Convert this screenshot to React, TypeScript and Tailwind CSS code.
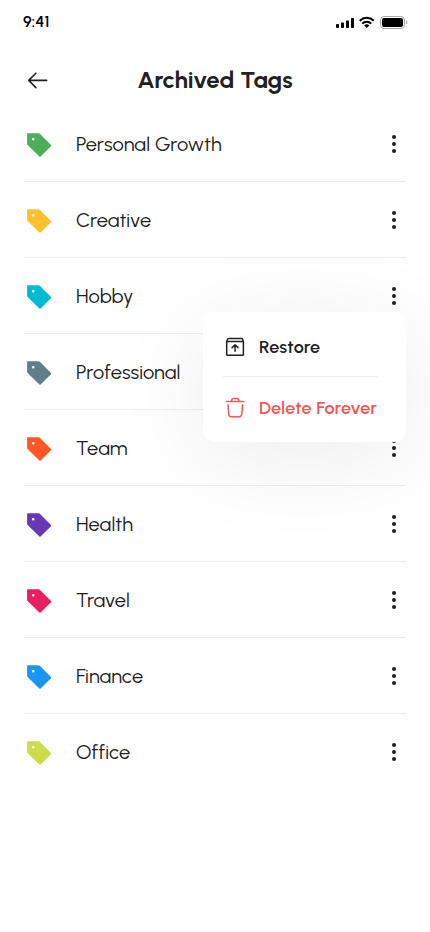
const tags = [
  { name: 'Personal Growth', color: '#4CAF57' },
  { name: 'Creative', color: '#FFC02D' },
  { name: 'Hobby', color: '#00BCD3' },
  { name: 'Professional', color: '#607D8A' },
  { name: 'Team', color: '#FF5726' },
  { name: 'Health', color: '#673AB3' },
  { name: 'Travel', color: '#E91E61' },
  { name: 'Finance', color: '#1A96F0' },
  { name: 'Office', color: '#CDDC4C' },
];

function StatusIcons() {
  return (
    <svg width="72" height="14" viewBox="0 0 72 14" fill="#000">
      <rect x="0" y="9" width="3" height="4" rx="0.8" />
      <rect x="5" y="7.500" width="3" height="5.500" rx="0.8" />
      <rect x="10" y="5.500" width="3" height="7.500" rx="0.8" />
      <rect x="15" y="3" width="3" height="10" rx="0.8" />
      <g fill="none" stroke="#000" strokeWidth="2">
        <path d="M23.700 5.700a10.200 10.200 0 0 1 14.100 0" />
        <path d="M26.200 8.600a6.600 6.600 0 0 1 9.100 0" />
      </g>
      <path d="M28.200 10.400a3.800 3.800 0 0 1 5.100 0L30.750 13Z" />
      <rect x="44.500" y="1.500" width="24" height="12" rx="3.600" fill="none" stroke="#a6a6a6" />
      <rect x="46" y="3" width="21" height="9" rx="2" />
      <path d="M70 5.500v4c.8-.3 1.300-1.100 1.300-2S70.800 5.800 70 5.500Z" fill="#a6a6a6" />
    </svg>
  );
}

function TagIcon({ color }: { color: string }) {
  return (
    <svg width="28" height="28" viewBox="0 0 28 28" fill={color} fillRule="evenodd">
      <path d="M3.900 3.200H14.400Q15.200 3.200 15.800 3.800L27 15Q27.500 15.600 27 16.200L16.600 26.600Q16 27.100 15.400 26.600L3.600 14.900Q3.100 14.400 3.100 13.700V4Q3.100 3.200 3.900 3.200ZM9.200 7.900a1.350 1.350 0 1 0 0 2.700a1.350 1.350 0 1 0 0-2.700Z" />
    </svg>
  );
}

function Dots() {
  return (
    <svg width="24" height="24" viewBox="0 0 24 24" fill="#212121">
      <circle cx="12" cy="5" r="2.050" />
      <circle cx="12" cy="12" r="2.050" />
      <circle cx="12" cy="19" r="2.050" />
    </svg>
  );
}

export default function App() {
  return (
    <div className="relative h-[932px] w-[430px] overflow-hidden bg-white font-['Urbanist','Lato',sans-serif] text-[#212121]">
      <div className="flex h-[44px] items-center justify-between pr-[22px] pl-[23px]">
        <span className="text-base leading-5 font-semibold tracking-[0.1px] text-black">9:41</span>
        <StatusIcons />
      </div>
      <header className="relative flex h-[62px] items-center justify-center pt-[10px]">
        <svg className="absolute top-[22px] left-6" width="28" height="28" viewBox="0 0 28 28" fill="none" stroke="#212121" strokeWidth="1.600" strokeLinecap="round" strokeLinejoin="round">
          <path d="M22.600 14.400H4.700M11.900 7.200L4.700 14.400l7.200 7.200" />
        </svg>
        <h1 className="text-2xl leading-8 font-bold">Archived Tags</h1>
      </header>
      <ul className="px-6">
        {tags.map((t) => (
          <li key={t.name} className="flex h-[76px] items-center border-b border-[#eeeeee] last:border-b-0">
            <TagIcon color={t.color} />
            <span className="ml-6 flex-1 text-xl leading-7 tracking-[0.08px]">{t.name}</span>
            <Dots />
          </li>
        ))}
      </ul>
      <div className="absolute top-[312px] left-[203px] flex h-[130px] w-[203px] flex-col rounded-xl bg-white px-5 pt-[9px] shadow-[0_16px_96px_rgba(4,6,15,0.075)]">
        <button className="flex h-[52px] items-center gap-3">
          <svg width="24" height="24" viewBox="0 0 24 24" fill="none" stroke="#212121" strokeWidth="1.500" strokeLinecap="round" strokeLinejoin="round">
            <path d="M3.700 6.500L4.700 4Q5 3.400 5.800 3.400H18.400Q19.200 3.400 19.500 4L20.400 6.500V19.500Q20.400 20.300 19.600 20.300H4.500Q3.700 20.300 3.700 19.500ZM3.700 6.600H20.400M12.050 16.300V9.900M9.100 12.600L12.050 9.700L15 12.600" />
          </svg>
          <span className="text-lg leading-6 font-semibold tracking-[0.2px]">Restore</span>
        </button>
        <div className="mt-[3px] h-px w-[155px] bg-[#eeeeee]" />
        <button className="mt-[5px] flex h-[52px] items-center gap-3 text-[#f75555]">
          <svg width="24" height="24" viewBox="0 0 24 24" fill="none" stroke="currentColor" strokeWidth="1.500" strokeLinecap="round" strokeLinejoin="round">
            <path d="M3.600 5.500H20.900M8.400 5.400L8.900 3.500Q9.200 2.500 10.200 2.500H14.300Q15.300 2.500 15.600 3.500L16.100 5.400M19.500 8.700L18.800 18.300Q18.600 20.700 16.200 20.700H8.300Q5.900 20.700 5.700 18.300L5 8.700" />
          </svg>
          <span className="text-lg leading-6 font-semibold tracking-[0.2px] whitespace-nowrap">Delete Forever</span>
        </button>
      </div>
    </div>
  );
}
